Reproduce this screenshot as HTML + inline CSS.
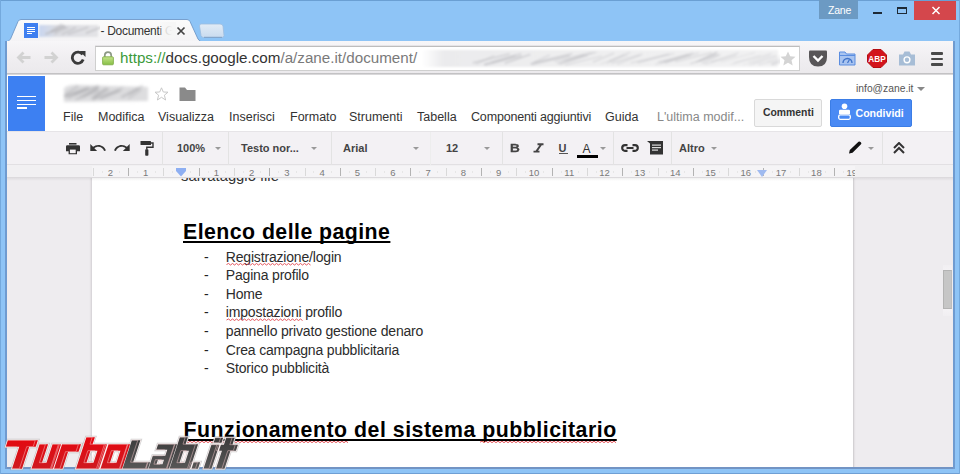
<!DOCTYPE html>
<html><head><meta charset="utf-8">
<style>
*{margin:0;padding:0;box-sizing:border-box}
html,body{width:960px;height:474px;overflow:hidden;background:#8ec4f6;font-family:"Liberation Sans",sans-serif}
.a{position:absolute}
.t{position:absolute;white-space:nowrap;line-height:1}
</style></head><body>
<!-- window frame -->
<div class="a" style="left:0;top:0;width:960px;height:474px;background:#8ec4f6"></div>
<div class="a" style="left:0;top:0;width:1px;height:474px;background:#6a9fd3"></div>
<div class="a" style="left:959px;top:0;width:1px;height:474px;background:#6a9fd3"></div>
<div class="a" style="left:0;top:0;width:960px;height:1px;background:#6a9fd3"></div>

<!-- title bar: Zane badge, window buttons -->
<div class="a" style="left:819px;top:0;width:39px;height:19px;background:#6c9ac3"></div>
<div class="t" style="left:828px;top:5px;font-size:10.5px;letter-spacing:-0.2px;color:#fff">Zane</div>
<div class="a" style="left:873px;top:12px;width:9px;height:2px;background:#1e2a36"></div>
<div class="a" style="left:897px;top:7px;width:10px;height:7px;border:1px solid #1e2a36;border-top-width:2px"></div>
<div class="a" style="left:914px;top:1px;width:42px;height:19px;background:#d4474c"></div>
<svg class="a" style="left:931px;top:6px" width="10" height="9" viewBox="0 0 10 9"><path d="M1.5 1 L8.5 8 M8.5 1 L1.5 8" stroke="#fff" stroke-width="1.5"/></svg>

<!-- tab -->
<svg class="a" style="left:0;top:0" width="960" height="80">
  <defs><linearGradient id="tabg" x1="0" y1="0" x2="0" y2="1"><stop offset="0" stop-color="#fbfbfb"/><stop offset="1" stop-color="#f4f3f5"/></linearGradient></defs><path d="M5 42.5 Q9 41.5 10.5 39 L18 21.5 Q19 19.5 21 19.5 L187 19.5 Q189 19.5 190 21.5 L198 39 Q199.5 41.5 203 42.5 Z" fill="url(#tabg)" stroke="#6f98c8" stroke-width="0.9"/>
  <defs><linearGradient id="ntg" x1="0" y1="0" x2="0" y2="1"><stop offset="0" stop-color="#e2ecf6"/><stop offset="1" stop-color="#c9dbef"/></linearGradient></defs><path d="M201 24 L220 24 Q222.5 24 223 26 L224 35.5 Q224 37.5 222 37.5 L203.5 37.5 Q201.5 37.5 201 35.5 L199.5 26 Q199.5 24 201 24 Z" fill="url(#ntg)" stroke="#9cbde0" stroke-width="0.8"/><path d="M204 37.3 L222 37.3" stroke="#7d9fc6" stroke-width="1"/>
</svg>
<div class="a" style="left:24px;top:23px;width:14px;height:15px;background:#3e7ff0"></div>
<div class="a" style="left:27px;top:27px;width:8px;height:1px;background:#fff"></div>
<div class="a" style="left:27px;top:29px;width:8px;height:1px;background:#fff"></div>
<div class="a" style="left:27px;top:31px;width:8px;height:1px;background:#fff"></div>
<div class="a" style="left:27px;top:33px;width:5px;height:1px;background:#fff"></div>
<svg class="a" style="left:38px;top:22px" width="62" height="18" viewBox="0 0 62 18"><defs><filter id="bl3" x="-10%" y="-30%" width="120%" height="160%"><feGaussianBlur stdDeviation="1.2"/></filter><linearGradient id="tg" x1="0" x2="1"><stop offset="0" stop-color="#c9d6ef"/><stop offset="0.3" stop-color="#dcdde2"/><stop offset="1" stop-color="#e3e3e6"/></linearGradient></defs><g filter="url(#bl3)"><rect x="1" y="3" width="59" height="12" fill="url(#tg)"/><path d="M12.6 9.2 L24.0 2.2" stroke="#b8b8bd" stroke-width="2.0" opacity="0.44"/><path d="M16.1 12.5 L30.8 5.5" stroke="#b8b8bd" stroke-width="1.3" opacity="0.53"/><path d="M29.7 12.3 L50.3 5.3" stroke="#b8b8bd" stroke-width="2.1" opacity="0.48"/><path d="M23.7 12.5 L38.0 5.5" stroke="#b8b8bd" stroke-width="2.2" opacity="0.45"/><path d="M12.9 9.9 L25.7 2.9" stroke="#b8b8bd" stroke-width="1.7" opacity="0.58"/><path d="M16.8 10.7 L26.9 3.7" stroke="#b8b8bd" stroke-width="1.6" opacity="0.57"/><path d="M47.9 11.1 L66.2 4.1" stroke="#b8b8bd" stroke-width="1.8" opacity="0.60"/><path d="M7.4 12.1 L28.2 5.1" stroke="#b8b8bd" stroke-width="2.1" opacity="0.64"/></g></svg>
<div class="t" style="left:100.5px;top:25px;font-size:12px;letter-spacing:-0.3px;color:#333">- Documenti G</div>
<div class="a" style="left:159px;top:22px;width:17px;height:16px;background:linear-gradient(90deg,rgba(246,246,246,0.2),rgba(246,246,246,0.85) 40%,#f6f6f6 80%)"></div>
<svg class="a" style="left:176px;top:26px" width="10" height="10" viewBox="0 0 10 10"><path d="M1.5 1.5 L8.5 8.5 M8.5 1.5 L1.5 8.5" stroke="#444" stroke-width="1.7"/></svg>

<!-- toolbar -->
<div class="a" style="left:7px;top:41px;width:946px;height:33px;background:linear-gradient(#f7f6f8,#efedf0 60%,#ebe9ec);"></div>
<div class="a" style="left:7px;top:73px;width:946px;height:1px;background:#c3c2c4"></div>
<div class="a" style="left:7px;top:74px;width:946px;height:1.5px;background:#d9d8da"></div>
<!-- nav buttons -->
<svg class="a" style="left:16px;top:50px" width="72" height="16" viewBox="0 0 72 16">
  <path d="M2.5 7.5 L14.5 7.5 M7.5 2.5 L2.5 7.5 L7.5 12.5" stroke="#d2d2d2" stroke-width="2.8" fill="none"/>
  <path d="M28.5 7.5 L40.5 7.5 M35.5 2.5 L40.5 7.5 L35.5 12.5" stroke="#d2d2d2" stroke-width="2.8" fill="none"/>
</svg>
<svg class="a" style="left:70px;top:50px" width="17" height="15" viewBox="0 0 17 15">
  <path d="M12.6 4.6 A5.6 5.6 0 1 0 13.2 9.6" stroke="#3a3a3a" stroke-width="2.8" fill="none"/>
  <path d="M9.5 1 L15.5 1 L15.5 7 Z" fill="#3a3a3a"/>
</svg>
<!-- address box -->
<div class="a" style="left:95px;top:46px;width:705px;height:25px;background:#fff;border:1px solid #cfcfcf;border-top-color:#bdbdbd;box-shadow:0 -1px 0 #e6e4e7"></div>
<svg class="a" style="left:102px;top:51px" width="12" height="15" viewBox="0 0 12 15"><defs><linearGradient id="lk" x1="0" y1="0" x2="0" y2="1"><stop offset="0" stop-color="#c6e58c"/><stop offset="1" stop-color="#86be45"/></linearGradient></defs>
  <path d="M2.8 6.5 L2.8 4.3 A3.2 3.2 0 0 1 9.2 4.3 L9.2 6.5" stroke="#8d9a86" stroke-width="1.7" fill="none"/>
  <rect x="0.6" y="5.8" width="10.8" height="8" rx="1" fill="url(#lk)" stroke="#7aa840" stroke-width="0.8"/>
</svg>
<div class="t" style="left:120px;top:50px;font-size:15.2px;color:#333"><span style="color:#3c9a3a">https://</span>docs.google.com<span style="color:#7a7a7a">/a/zane.it/document/</span></div>
<svg class="a" style="left:420px;top:47px" width="360" height="23" viewBox="0 0 360 23"><defs><filter id="bl" x="-5%" y="-30%" width="110%" height="160%"><feGaussianBlur stdDeviation="1.3"/></filter><linearGradient id="ab" x1="0" x2="1"><stop offset="0" stop-color="#fff"/><stop offset="0.06" stop-color="#ebebed"/><stop offset="0.5" stop-color="#efeff0"/><stop offset="1" stop-color="#f2f2f3"/></linearGradient></defs><g filter="url(#bl)"><rect x="2" y="3" width="356" height="17" fill="url(#ab)"/><path d="M71.4 15.5 L101.4 6.5" stroke="#b9b9be" stroke-width="1.8" opacity="0.43"/><path d="M55.9 17.3 L74.2 8.3" stroke="#b9b9be" stroke-width="1.5" opacity="0.35"/><path d="M139.6 17.3 L168.0 8.3" stroke="#b9b9be" stroke-width="1.7" opacity="0.43"/><path d="M63.6 17.5 L95.5 8.5" stroke="#b9b9be" stroke-width="1.7" opacity="0.45"/><path d="M110.4 17.0 L129.8 8.0" stroke="#b9b9be" stroke-width="1.8" opacity="0.36"/><path d="M52.8 15.9 L89.8 6.9" stroke="#b9b9be" stroke-width="1.9" opacity="0.48"/><path d="M114.3 15.6 L152.5 6.6" stroke="#b9b9be" stroke-width="2.0" opacity="0.39"/><path d="M134.2 14.4 L171.5 5.4" stroke="#b9b9be" stroke-width="1.3" opacity="0.34"/><path d="M136.9 16.5 L164.5 7.5" stroke="#b9b9be" stroke-width="1.5" opacity="0.40"/><path d="M84.7 16.3 L110.4 7.3" stroke="#b9b9be" stroke-width="1.8" opacity="0.48"/><path d="M111.4 17.4 L149.8 8.4" stroke="#b9b9be" stroke-width="2.2" opacity="0.43"/><path d="M64.7 17.9 L101.6 8.9" stroke="#b9b9be" stroke-width="2.1" opacity="0.41"/><path d="M197.1 17.3 L219.8 8.3" stroke="#b9b9be" stroke-width="1.8" opacity="0.25"/><path d="M145.1 18.0 L181.9 9.0" stroke="#b9b9be" stroke-width="1.3" opacity="0.32"/><path d="M172.8 15.2 L194.2 6.2" stroke="#b9b9be" stroke-width="2.0" opacity="0.33"/><path d="M143.5 14.2 L175.1 5.2" stroke="#b9b9be" stroke-width="1.9" opacity="0.26"/><path d="M210.5 16.0 L250.0 7.0" stroke="#b9b9be" stroke-width="2.2" opacity="0.25"/><path d="M146.2 14.1 L177.4 5.1" stroke="#b9b9be" stroke-width="1.4" opacity="0.27"/><path d="M188.8 14.2 L210.3 5.2" stroke="#b9b9be" stroke-width="2.1" opacity="0.25"/><path d="M216.7 15.5 L254.4 6.5" stroke="#b9b9be" stroke-width="1.7" opacity="0.28"/><path d="M191.5 16.2 L222.6 7.2" stroke="#b9b9be" stroke-width="1.8" opacity="0.34"/><path d="M180.6 16.9 L208.0 7.9" stroke="#b9b9be" stroke-width="1.4" opacity="0.25"/><path d="M218.2 16.2 L247.7 7.2" stroke="#b9b9be" stroke-width="1.2" opacity="0.27"/><path d="M186.4 16.5 L204.8 7.5" stroke="#b9b9be" stroke-width="1.8" opacity="0.22"/><path d="M270.2 16.7 L298.4 7.7" stroke="#b9b9be" stroke-width="1.6" opacity="0.40"/><path d="M279.0 14.2 L297.5 5.2" stroke="#b9b9be" stroke-width="1.9" opacity="0.44"/><path d="M240.1 16.4 L268.1 7.4" stroke="#b9b9be" stroke-width="1.5" opacity="0.34"/><path d="M245.0 16.4 L271.1 7.4" stroke="#b9b9be" stroke-width="1.5" opacity="0.34"/><path d="M281.8 16.3 L300.4 7.3" stroke="#b9b9be" stroke-width="1.9" opacity="0.33"/><path d="M237.8 15.0 L273.5 6.0" stroke="#b9b9be" stroke-width="1.4" opacity="0.35"/><path d="M275.8 15.3 L296.1 6.3" stroke="#b9b9be" stroke-width="1.5" opacity="0.42"/><path d="M255.1 14.7 L291.9 5.7" stroke="#b9b9be" stroke-width="1.5" opacity="0.39"/><path d="M290.8 14.9 L318.7 5.9" stroke="#b9b9be" stroke-width="1.3" opacity="0.37"/><path d="M235.3 17.4 L271.0 8.4" stroke="#b9b9be" stroke-width="1.4" opacity="0.32"/><path d="M284.6 17.2 L316.7 8.2" stroke="#b9b9be" stroke-width="1.5" opacity="0.29"/><path d="M243.4 15.1 L278.8 6.1" stroke="#b9b9be" stroke-width="1.5" opacity="0.35"/><path d="M323.1 17.7 L350.1 8.7" stroke="#b9b9be" stroke-width="1.4" opacity="0.15"/><path d="M351.9 17.9 L389.2 8.9" stroke="#b9b9be" stroke-width="1.6" opacity="0.25"/><path d="M351.0 17.0 L373.9 8.0" stroke="#b9b9be" stroke-width="2.0" opacity="0.22"/><path d="M328.5 15.4 L352.9 6.4" stroke="#b9b9be" stroke-width="1.4" opacity="0.16"/><path d="M332.4 17.2 L356.7 8.2" stroke="#b9b9be" stroke-width="1.2" opacity="0.24"/><path d="M338.2 17.6 L376.5 8.6" stroke="#b9b9be" stroke-width="2.1" opacity="0.21"/><path d="M300.7 14.7 L335.1 5.7" stroke="#b9b9be" stroke-width="1.5" opacity="0.22"/><path d="M328.9 17.8 L356.0 8.8" stroke="#b9b9be" stroke-width="1.8" opacity="0.18"/><path d="M313.9 15.9 L350.8 6.9" stroke="#b9b9be" stroke-width="2.0" opacity="0.19"/><path d="M310.9 17.3 L340.6 8.3" stroke="#b9b9be" stroke-width="1.4" opacity="0.23"/><path d="M350.7 17.3 L386.4 8.3" stroke="#b9b9be" stroke-width="1.2" opacity="0.21"/><path d="M347.4 15.1 L366.5 6.1" stroke="#b9b9be" stroke-width="1.5" opacity="0.20"/></g></svg>
<svg class="a" style="left:780px;top:51px" width="16" height="15" viewBox="0 0 16 15"><path d="M8 0.5 L10.2 5.3 L15.5 5.8 L11.5 9.3 L12.7 14.5 L8 11.8 L3.3 14.5 L4.5 9.3 L0.5 5.8 L5.8 5.3 Z" fill="#d4d4d4"/></svg>
<!-- extension icons -->
<svg class="a" style="left:808px;top:50px" width="20" height="17" viewBox="0 0 20 17"><path d="M1 1.5 Q1 0.5 2 0.5 L18 0.5 Q19 0.5 19 1.5 L19 7 Q19 16.5 10 16.5 Q1 16.5 1 7 Z" fill="#585658"/><path d="M5.5 6 L10 10.5 L14.5 6" stroke="#fff" stroke-width="2.4" fill="none"/></svg>
<svg class="a" style="left:839px;top:51px" width="17" height="15" viewBox="0 0 17 15"><path d="M0.5 1 L6 1 L7.5 3 L16 3 L16 14 L0.5 14 Z" fill="#a9c4f0" stroke="#5b8de0"/><path d="M0.5 4.5 L16 4.5" stroke="#5b8de0"/><path d="M4 12 A4.5 4.5 0 0 1 13 12" stroke="#3f72c8" stroke-width="1.4" fill="none"/><path d="M8.5 12 L10.5 8.5" stroke="#3f72c8" stroke-width="1.2"/></svg>
<svg class="a" style="left:867px;top:49px" width="20" height="19" viewBox="0 0 20 19"><path d="M6 0.5 L14 0.5 L19.5 6 L19.5 13 L14 18.5 L6 18.5 L0.5 13 L0.5 6 Z" fill="#d3141c" stroke="#b40d12"/><text x="10" y="13" text-anchor="middle" font-family="Liberation Sans" font-weight="bold" font-size="8.2" fill="#fff">ABP</text></svg>
<svg class="a" style="left:898px;top:51px" width="18" height="15" viewBox="0 0 18 15"><path d="M1 3.5 L5 3.5 L6.5 0.5 L11.5 0.5 L13 3.5 L17 3.5 L17 14.5 L1 14.5 Z" fill="#a7bdd6"/><circle cx="9" cy="8.8" r="3.6" fill="#fff"/><circle cx="9" cy="8.8" r="2.2" fill="#a7bdd6"/></svg>
<div class="a" style="left:931px;top:52px;width:12px;height:2.5px;background:#4a4a4a;border-radius:1px"></div>
<div class="a" style="left:931px;top:57.5px;width:12px;height:2.5px;background:#4a4a4a;border-radius:1px"></div>
<div class="a" style="left:931px;top:63px;width:12px;height:2.5px;background:#4a4a4a;border-radius:1px"></div>

<!-- docs header -->
<div class="a" style="left:7px;top:75px;width:946px;height:56px;background:#fff"></div>
<div class="a" style="left:8px;top:75.5px;width:37px;height:55.5px;background:#3d80f2"></div>
<div class="a" style="left:17.3px;top:95.8px;width:18.5px;height:1.7px;background:#fff"></div>
<div class="a" style="left:17.3px;top:99.6px;width:18.5px;height:1.7px;background:#fff"></div>
<div class="a" style="left:17.3px;top:103.5px;width:18.5px;height:1.7px;background:#fff"></div>
<div class="a" style="left:17.3px;top:107.3px;width:10px;height:1.7px;background:#fff"></div>
<svg class="a" style="left:60px;top:80px" width="92" height="26" viewBox="0 0 92 26"><defs><filter id="bl2" x="-10%" y="-30%" width="120%" height="160%"><feGaussianBlur stdDeviation="1.4"/></filter></defs><g filter="url(#bl2)"><path d="M4 8 Q10 4 20 5 L88 7 L88 21 L4 22 Z" fill="#dddddf"/><path d="M22.7 16.9 L37.4 7.9" stroke="#a9a9ad" stroke-width="1.6" opacity="0.54"/><path d="M25.6 15.6 L38.6 6.6" stroke="#a9a9ad" stroke-width="1.5" opacity="0.50"/><path d="M4.9 14.8 L18.5 5.8" stroke="#a9a9ad" stroke-width="2.6" opacity="0.39"/><path d="M15.6 19.5 L38.9 10.5" stroke="#a9a9ad" stroke-width="2.3" opacity="0.49"/><path d="M68.3 18.7 L81.2 9.7" stroke="#a9a9ad" stroke-width="1.9" opacity="0.40"/><path d="M8.2 18.3 L25.8 9.3" stroke="#a9a9ad" stroke-width="1.7" opacity="0.55"/><path d="M44.7 15.9 L63.4 6.9" stroke="#a9a9ad" stroke-width="1.6" opacity="0.37"/><path d="M14.4 14.8 L38.7 5.8" stroke="#a9a9ad" stroke-width="1.9" opacity="0.55"/><path d="M31.7 18.1 L49.1 9.1" stroke="#a9a9ad" stroke-width="2.4" opacity="0.44"/><path d="M40.2 18.9 L61.7 9.9" stroke="#a9a9ad" stroke-width="2.4" opacity="0.45"/><path d="M68.6 14.8 L82.7 5.8" stroke="#a9a9ad" stroke-width="2.5" opacity="0.40"/><path d="M34.2 17.0 L46.9 8.0" stroke="#a9a9ad" stroke-width="2.5" opacity="0.55"/><path d="M61.3 17.3 L78.9 8.3" stroke="#a9a9ad" stroke-width="2.3" opacity="0.55"/><path d="M31.9 19.5 L59.1 10.5" stroke="#a9a9ad" stroke-width="2.1" opacity="0.58"/><path d="M4.2 16.8 L28.9 7.8" stroke="#a9a9ad" stroke-width="2.8" opacity="0.64"/><path d="M19.9 17.0 L38.9 8.0" stroke="#a9a9ad" stroke-width="1.5" opacity="0.51"/></g></svg>
<svg class="a" style="left:154px;top:87px" width="15" height="14" viewBox="0 0 15 14"><path d="M7.5 0.8 L9.3 5 L14 5.2 L10.4 8.2 L11.6 13 L7.5 10.3 L3.4 13 L4.6 8.2 L1 5.2 L5.7 5 Z" fill="none" stroke="#c8c8c8" stroke-width="1"/></svg>
<svg class="a" style="left:179px;top:87px" width="17" height="14" viewBox="0 0 17 14"><path d="M0.5 0.5 L6 0.5 L8 3 L16.5 3 L16.5 14 L0.5 14 Z" fill="#8a8a8a"/></svg>
<div class="t" style="left:63px;top:111px;font-size:12.5px;color:#333">File</div>
<div class="t" style="left:98px;top:111px;font-size:12.5px;color:#333">Modifica</div>
<div class="t" style="left:158px;top:111px;font-size:12.5px;color:#333">Visualizza</div>
<div class="t" style="left:229px;top:111px;font-size:12.5px;color:#333">Inserisci</div>
<div class="t" style="left:290px;top:111px;font-size:12.5px;color:#333">Formato</div>
<div class="t" style="left:349px;top:111px;font-size:12.5px;color:#333">Strumenti</div>
<div class="t" style="left:417px;top:111px;font-size:12.5px;color:#333">Tabella</div>
<div class="t" style="left:471px;top:111px;font-size:12.5px;letter-spacing:-0.17px;color:#333">Componenti aggiuntivi</div>
<div class="t" style="left:605px;top:111px;font-size:12.5px;color:#333">Guida</div>
<div class="t" style="left:657px;top:111px;font-size:12.5px;color:#888">L'ultima modif...</div>
<div class="t" style="left:856px;top:83.5px;font-size:10.3px;color:#555">info@zane.it</div>
<svg class="a" style="left:917px;top:87px" width="8" height="5"><path d="M0 0 L8 0 L4 4 Z" fill="#888"/></svg>
<div class="a" style="left:754px;top:99px;width:68px;height:28px;background:#f5f5f5;border:1px solid #d9d9d9;border-radius:2px"></div>
<div class="t" style="left:763px;top:107.5px;font-size:10.4px;font-weight:bold;color:#333">Commenti</div>
<div class="a" style="left:830px;top:99px;width:82px;height:28px;background:#4a8af4;border:1px solid #3b7de6;border-radius:2px"></div>
<svg class="a" style="left:838px;top:103px" width="13" height="17" viewBox="0 0 13 17"><circle cx="6.5" cy="3.2" r="2.8" fill="#fff"/><path d="M1 8 Q1 6.8 2.2 6.8 L10.8 6.8 Q12 6.8 12 8 L12 11 L1 11 Z" fill="#fff"/><rect x="0.7" y="11.8" width="11.6" height="4.5" rx="1.5" fill="none" stroke="#fff" stroke-width="1.3"/></svg>
<div class="t" style="left:855.5px;top:107.5px;font-size:10.6px;font-weight:bold;color:#fff">Condividi</div>

<!-- docs toolbar -->
<div class="a" style="left:7px;top:131px;width:946px;height:34px;background:#f3f1f4;border-top:1px solid #e6e4e7;border-bottom:1px solid #e2e0e3"></div>
<svg class="a" style="left:65.5px;top:142.5px" width="14" height="12" viewBox="0 0 14 12"><rect x="3" y="0" width="7.5" height="1.6" fill="#333"/><path d="M1.3 2.2 L12.7 2.2 Q14 2.2 14 3.5 L14 8.3 L11 8.3 L11 11.3 L2.6 11.3 L2.6 8.3 L0 8.3 L0 3.5 Q0 2.2 1.3 2.2 Z" fill="#333"/><rect x="3.9" y="6.6" width="5.8" height="3.6" fill="#f5f3f5"/></svg>
<svg class="a" style="left:89.5px;top:143.5px" width="16" height="8" viewBox="1.6 7.6 21 9"><path d="M12.5 8c-2.65 0-5.05.99-6.9 2.6L2 7v9h9l-3.62-3.62c1.39-1.16 3.16-1.88 5.12-1.88 3.54 0 6.55 2.31 7.6 5.5l2.37-.78C21.08 11.03 17.15 8 12.5 8z" fill="#333"/></svg>
<svg class="a" style="left:113.5px;top:143.5px" width="16" height="8" viewBox="1.4 7.6 21 9"><path d="M18.4 10.6C16.55 8.99 14.15 8 11.5 8c-4.65 0-8.58 3.03-9.96 7.22L3.9 16c1.05-3.19 4.05-5.5 7.6-5.5 1.95 0 3.730.72 5.12 1.88L13 16h9V7l-3.6 3.6z" fill="#333"/></svg>
<svg class="a" style="left:139.5px;top:140.5px" width="14" height="15" viewBox="0 0 14 15"><rect x="0.5" y="0" width="10.5" height="4" rx="0.6" fill="#333"/><path d="M11 2 L13 2 L13 6.3 L6.8 6.3 L6.8 8.5" stroke="#333" stroke-width="1.4" fill="none"/><rect x="5.2" y="8.3" width="3.2" height="6.5" rx="0.8" fill="#333"/></svg>
<div class="a" style="left:162px;top:132px;width:1px;height:33px;background:#e3e3e3"></div>
<div class="t" style="left:177px;top:143px;font-size:11px;font-weight:bold;color:#444">100%</div>
<svg class="a" style="left:215px;top:147px" width="6" height="4"><path d="M0 0 L6 0 L3 3 Z" fill="#999"/></svg>
<div class="a" style="left:228px;top:132px;width:1px;height:33px;background:#e3e3e3"></div>
<div class="t" style="left:241px;top:143px;font-size:11px;font-weight:bold;color:#444">Testo nor...</div>
<svg class="a" style="left:311px;top:147px" width="6" height="4"><path d="M0 0 L6 0 L3 3 Z" fill="#999"/></svg>
<div class="a" style="left:331px;top:132px;width:1px;height:33px;background:#e3e3e3"></div>
<div class="t" style="left:343px;top:143px;font-size:11px;font-weight:bold;color:#444">Arial</div>
<svg class="a" style="left:413px;top:147px" width="6" height="4"><path d="M0 0 L6 0 L3 3 Z" fill="#999"/></svg>
<div class="a" style="left:430px;top:132px;width:1px;height:33px;background:#ededed"></div>
<div class="t" style="left:446px;top:143px;font-size:11px;font-weight:bold;color:#444">12</div>
<svg class="a" style="left:484px;top:147px" width="6" height="4"><path d="M0 0 L6 0 L3 3 Z" fill="#999"/></svg>
<div class="a" style="left:502px;top:132px;width:1px;height:33px;background:#e3e3e3"></div>
<div class="t" style="left:509.5px;top:142.8px;font-size:11.5px;font-weight:bold;color:#444;transform:scaleX(1.18);transform-origin:0 0;-webkit-text-stroke:0.3px #444">B</div>
<svg class="a" style="left:533px;top:143px" width="11" height="10" viewBox="0 0 11 10"><path d="M4.5 1.2 L10.5 1.2 M0.5 8.6 L6.5 8.6 M8.3 1.2 L3.2 8.6" stroke="#444" stroke-width="1.9" fill="none"/></svg>
<div class="t" style="left:558.5px;top:143px;font-size:11px;font-weight:bold;color:#444">U</div><div class="a" style="left:558.5px;top:153px;width:9px;height:1px;background:#555"></div>
<div class="t" style="left:582.5px;top:142.5px;font-size:12px;color:#333">A</div>
<div class="a" style="left:577px;top:155px;width:21px;height:3px;background:#000"></div>
<svg class="a" style="left:600px;top:147px" width="6" height="4"><path d="M0 0 L6 0 L3 3 Z" fill="#999"/></svg>
<div class="a" style="left:613px;top:132px;width:1px;height:33px;background:#e3e3e3"></div>
<svg class="a" style="left:621px;top:144px" width="18" height="8" viewBox="0 0 18 8"><path d="M6.5 1.2 L4 1.2 A2.8 2.8 0 0 0 4 6.8 L6.5 6.8 M11.5 1.2 L14 1.2 A2.8 2.8 0 0 1 14 6.8 L11.5 6.8 M5.5 4 L12.5 4" stroke="#333" stroke-width="2.2" fill="none"/></svg>
<svg class="a" style="left:646.5px;top:140.5px" width="16" height="14" viewBox="0 0 16 14"><path d="M0 0 L16 0 L16 13.5 L3 13.5 L3 2.5 Z" fill="#333"/><rect x="5" y="3.5" width="9" height="1.2" fill="#ddd"/><rect x="5" y="6" width="9" height="1.2" fill="#ddd"/><rect x="5" y="8.5" width="6" height="1.2" fill="#ddd"/></svg>
<div class="a" style="left:671px;top:132px;width:1px;height:33px;background:#e3e3e3"></div>
<div class="t" style="left:679px;top:143px;font-size:11px;font-weight:bold;color:#444">Altro</div>
<svg class="a" style="left:711px;top:147px" width="6" height="4"><path d="M0 0 L6 0 L3 3 Z" fill="#999"/></svg>
<svg class="a" style="left:848px;top:141px" width="14" height="13" viewBox="0 0 14 13"><path d="M1 12.5 L1.8 9 L10.5 0.8 Q11.5 0 12.5 1 L13 1.5 Q13.8 2.5 13 3.3 L4.5 11.8 Z" fill="#111"/></svg>
<svg class="a" style="left:868px;top:147px" width="6" height="4"><path d="M0 0 L6 0 L3 3 Z" fill="#999"/></svg>
<div class="a" style="left:882px;top:132px;width:1px;height:33px;background:#e3e3e3"></div>
<svg class="a" style="left:893px;top:142px" width="12" height="12" viewBox="0 0 12 12"><path d="M1 6 L6 1 L11 6 M1 11 L6 6 L11 11" stroke="#333" stroke-width="2" fill="none"/></svg>

<!-- document area -->
<div class="a" style="left:7px;top:178px;width:946px;height:289px;background:#eeecef"></div>
<div class="a" style="left:91px;top:178px;width:763px;height:289px;background:#fff;border-left:1px solid #d9d6da;border-right:1px solid #d3d1d4;box-shadow:-1px 0 1px rgba(80,60,80,0.06),1px 0 1px rgba(80,60,80,0.06)"></div>
<div class="a" style="left:943px;top:265px;width:9px;height:51px;background:linear-gradient(#f1eff2,#f8f7f9 30%,#f8f7f9 70%,#f1eff2)"></div><div class="a" style="left:943px;top:270px;width:9px;height:39px;background:#c6c6c6;border:1px solid #b3b3b3;border-right-color:#bdbdbd"></div>

<!-- doc content -->
<div class="t" style="left:181px;top:169px;font-size:14.8px;color:#333">salvataggio file</div>
<div class="t" style="left:183px;top:221.7px;font-size:21.3px;font-weight:bold;color:#000;letter-spacing:0.45px;text-decoration:underline;text-decoration-thickness:1.6px;text-underline-offset:2.2px;text-decoration-skip-ink:none">Elenco delle pagine</div>
<div class="t" style="left:204px;top:249.65px;font-size:14px;color:#222">-</div>
<div class="t" style="left:225.8px;top:249.65px;font-size:14px;letter-spacing:-0.18px;color:#2c2c2c">Registrazione/login</div>
<div class="t" style="left:204px;top:268.23px;font-size:14px;color:#222">-</div>
<div class="t" style="left:225.8px;top:268.23px;font-size:14px;letter-spacing:-0.18px;color:#2c2c2c">Pagina profilo</div>
<div class="t" style="left:204px;top:286.81px;font-size:14px;color:#222">-</div>
<div class="t" style="left:225.8px;top:286.81px;font-size:14px;letter-spacing:-0.18px;color:#2c2c2c">Home</div>
<div class="t" style="left:204px;top:305.39px;font-size:14px;color:#222">-</div>
<div class="t" style="left:225.8px;top:305.39px;font-size:14px;letter-spacing:-0.18px;color:#2c2c2c">impostazioni profilo</div>
<div class="t" style="left:204px;top:323.97px;font-size:14px;color:#222">-</div>
<div class="t" style="left:225.8px;top:323.97px;font-size:14px;letter-spacing:-0.18px;color:#2c2c2c">pannello privato gestione denaro</div>
<div class="t" style="left:204px;top:342.55px;font-size:14px;color:#222">-</div>
<div class="t" style="left:225.8px;top:342.55px;font-size:14px;letter-spacing:-0.18px;color:#2c2c2c">Crea campagna pubblicitaria</div>
<div class="t" style="left:204px;top:361.13px;font-size:14px;color:#222">-</div>
<div class="t" style="left:225.8px;top:361.13px;font-size:14px;letter-spacing:-0.18px;color:#2c2c2c">Storico pubblicità</div>
<div class="t" style="left:183.5px;top:419.7px;font-size:21.3px;font-weight:bold;color:#000;letter-spacing:0.52px;text-decoration:underline;text-decoration-thickness:1.6px;text-underline-offset:2.2px;text-decoration-skip-ink:none">Funzionamento del sistema pubblicitario</div>
<svg class="a" style="left:0;top:0" width="960" height="474"><path d="M226.5 264.5 L228.5 263.5 L230.5 265.0 L232.5 263.5 L234.5 265.0 L236.5 263.5 L238.5 265.0 L240.5 263.5 L242.5 265.0 L244.5 263.5 L246.5 265.0 L248.5 263.5 L250.5 265.0 L252.5 263.5 L254.5 265.0 L256.5 263.5 L258.5 265.0 L260.5 263.5 L262.5 265.0 L264.5 263.5 L266.5 265.0 L268.5 263.5 L270.5 265.0 L272.5 263.5 L274.5 265.0 L276.5 263.5 L278.5 265.0 L280.5 263.5 L282.5 265.0 L284.5 263.5 L286.5 265.0 L288.5 263.5 L290.5 265.0 L292.5 263.5 L294.5 265.0 L296.5 263.5 L298.5 265.0 L300.5 263.5 L302.5 265.0 L304.5 263.5 L306.5 265.0 L308.5 263.5 L310.5 265.0 M226.5 320.0 L228.5 319.0 L230.5 320.5 L232.5 319.0 L234.5 320.5 L236.5 319.0 L238.5 320.5 L240.5 319.0 L242.5 320.5 L244.5 319.0 L246.5 320.5 L248.5 319.0 L250.5 320.5 L252.5 319.0 L254.5 320.5 L256.5 319.0 L258.5 320.5 L260.5 319.0 L262.5 320.5 L264.5 319.0 L266.5 320.5 L268.5 319.0 L270.5 320.5 L272.5 319.0 L274.5 320.5 L276.5 319.0 L278.5 320.5 L280.5 319.0 L282.5 320.5 L284.5 319.0 L286.5 320.5 L288.5 319.0 L290.5 320.5 L292.5 319.0 L294.5 320.5 L296.5 319.0 L298.5 320.5 L300.5 319.0 L302.5 320.5 M184.0 442.2 L186.0 441.2 L188.0 442.7 L190.0 441.2 L192.0 442.7 L194.0 441.2 L196.0 442.7 L198.0 441.2 L200.0 442.7 L202.0 441.2 L204.0 442.7 L206.0 441.2 L208.0 442.7 L210.0 441.2 L212.0 442.7 L214.0 441.2 L216.0 442.7 L218.0 441.2 L220.0 442.7 L222.0 441.2 L224.0 442.7 L226.0 441.2 L228.0 442.7 L230.0 441.2 L232.0 442.7 L234.0 441.2 L236.0 442.7 L238.0 441.2 L240.0 442.7 L242.0 441.2 L244.0 442.7 L246.0 441.2 L248.0 442.7 L250.0 441.2 L252.0 442.7 L254.0 441.2 L256.0 442.7 L258.0 441.2 L260.0 442.7 L262.0 441.2 L264.0 442.7 L266.0 441.2 L268.0 442.7 L270.0 441.2 L272.0 442.7 L274.0 441.2 L276.0 442.7 L278.0 441.2 L280.0 442.7 L282.0 441.2 L284.0 442.7 L286.0 441.2 L288.0 442.7 L290.0 441.2 L292.0 442.7 L294.0 441.2 L296.0 442.7 L298.0 441.2 L300.0 442.7 L302.0 441.2 L304.0 442.7 L306.0 441.2 L308.0 442.7 L310.0 441.2 L312.0 442.7 L314.0 441.2 L316.0 442.7 L318.0 441.2 L320.0 442.7 L322.0 441.2 L324.0 442.7 L326.0 441.2 L328.0 442.7 L330.0 441.2 L332.0 442.7 L334.0 441.2 L336.0 442.7 L338.0 441.2 L340.0 442.7 L342.0 441.2 L344.0 442.7 L346.0 441.2 L348.0 442.7 M480.0 442.2 L482.0 441.2 L484.0 442.7 L486.0 441.2 L488.0 442.7 L490.0 441.2 L492.0 442.7 L494.0 441.2 L496.0 442.7 L498.0 441.2 L500.0 442.7 L502.0 441.2 L504.0 442.7 L506.0 441.2 L508.0 442.7 L510.0 441.2 L512.0 442.7 L514.0 441.2 L516.0 442.7 L518.0 441.2 L520.0 442.7 L522.0 441.2 L524.0 442.7 L526.0 441.2 L528.0 442.7 L530.0 441.2 L532.0 442.7 L534.0 441.2 L536.0 442.7 L538.0 441.2 L540.0 442.7 L542.0 441.2 L544.0 442.7 L546.0 441.2 L548.0 442.7 L550.0 441.2 L552.0 442.7 L554.0 441.2 L556.0 442.7 L558.0 441.2 L560.0 442.7 L562.0 441.2 L564.0 442.7 L566.0 441.2 L568.0 442.7 L570.0 441.2 L572.0 442.7 L574.0 441.2 L576.0 442.7 L578.0 441.2 L580.0 442.7 L582.0 441.2 L584.0 442.7 L586.0 441.2 L588.0 442.7 L590.0 441.2 L592.0 442.7 L594.0 441.2 L596.0 442.7 L598.0 441.2 L600.0 442.7 L602.0 441.2 L604.0 442.7 L606.0 441.2 L608.0 442.7 L610.0 441.2 L612.0 442.7 L614.0 441.2 L616.0 442.7" stroke="#e0454c" stroke-width="0.9" fill="none"/></svg>
<!-- ruler -->
<div class="a" style="left:7px;top:165px;width:946px;height:13px;background:#f1f0f2;border-bottom:1px solid #dcdadd"></div>
<div class="a" style="left:92px;top:166px;width:765px;height:11px;background:#f5f4f6"></div>
<div class="t" style="left:98.4px;top:168px;width:24px;text-align:center;font-size:9.5px;color:#7a7a7a">2</div>
<div class="t" style="left:133.7px;top:168px;width:24px;text-align:center;font-size:9.5px;color:#7a7a7a">1</div>
<div class="t" style="left:204.3px;top:168px;width:24px;text-align:center;font-size:9.5px;color:#7a7a7a">1</div>
<div class="t" style="left:239.6px;top:168px;width:24px;text-align:center;font-size:9.5px;color:#7a7a7a">2</div>
<div class="t" style="left:274.9px;top:168px;width:24px;text-align:center;font-size:9.5px;color:#7a7a7a">3</div>
<div class="t" style="left:310.2px;top:168px;width:24px;text-align:center;font-size:9.5px;color:#7a7a7a">4</div>
<div class="t" style="left:345.5px;top:168px;width:24px;text-align:center;font-size:9.5px;color:#7a7a7a">5</div>
<div class="t" style="left:380.8px;top:168px;width:24px;text-align:center;font-size:9.5px;color:#7a7a7a">6</div>
<div class="t" style="left:416.1px;top:168px;width:24px;text-align:center;font-size:9.5px;color:#7a7a7a">7</div>
<div class="t" style="left:451.4px;top:168px;width:24px;text-align:center;font-size:9.5px;color:#7a7a7a">8</div>
<div class="t" style="left:486.7px;top:168px;width:24px;text-align:center;font-size:9.5px;color:#7a7a7a">9</div>
<div class="t" style="left:522.0px;top:168px;width:24px;text-align:center;font-size:9.5px;color:#7a7a7a">10</div>
<div class="t" style="left:557.3px;top:168px;width:24px;text-align:center;font-size:9.5px;color:#7a7a7a">11</div>
<div class="t" style="left:592.6px;top:168px;width:24px;text-align:center;font-size:9.5px;color:#7a7a7a">12</div>
<div class="t" style="left:627.9px;top:168px;width:24px;text-align:center;font-size:9.5px;color:#7a7a7a">13</div>
<div class="t" style="left:663.2px;top:168px;width:24px;text-align:center;font-size:9.5px;color:#7a7a7a">14</div>
<div class="t" style="left:698.5px;top:168px;width:24px;text-align:center;font-size:9.5px;color:#7a7a7a">15</div>
<div class="t" style="left:733.8px;top:168px;width:24px;text-align:center;font-size:9.5px;color:#7a7a7a">16</div>
<div class="t" style="left:769.1px;top:168px;width:24px;text-align:center;font-size:9.5px;color:#7a7a7a">17</div>
<div class="t" style="left:804.4px;top:168px;width:24px;text-align:center;font-size:9.5px;color:#7a7a7a">18</div>
<div class="t" style="left:839.7px;top:168px;width:24px;text-align:center;font-size:9.5px;color:#7a7a7a">19</div>
<div class="a" style="left:92.8px;top:168px;width:1px;height:8px;background:#d9d9d9"></div>
<div class="a" style="left:128.1px;top:168px;width:1px;height:8px;background:#b3b3b3"></div>
<div class="a" style="left:163.3px;top:168px;width:1px;height:8px;background:#d9d9d9"></div>
<div class="a" style="left:198.7px;top:168px;width:1px;height:8px;background:#b3b3b3"></div>
<div class="a" style="left:233.9px;top:168px;width:1px;height:8px;background:#d9d9d9"></div>
<div class="a" style="left:269.2px;top:168px;width:1px;height:8px;background:#b3b3b3"></div>
<div class="a" style="left:304.5px;top:168px;width:1px;height:8px;background:#d9d9d9"></div>
<div class="a" style="left:339.9px;top:168px;width:1px;height:8px;background:#b3b3b3"></div>
<div class="a" style="left:375.1px;top:168px;width:1px;height:8px;background:#d9d9d9"></div>
<div class="a" style="left:410.4px;top:168px;width:1px;height:8px;background:#b3b3b3"></div>
<div class="a" style="left:445.8px;top:168px;width:1px;height:8px;background:#d9d9d9"></div>
<div class="a" style="left:481.0px;top:168px;width:1px;height:8px;background:#b3b3b3"></div>
<div class="a" style="left:516.3px;top:168px;width:1px;height:8px;background:#d9d9d9"></div>
<div class="a" style="left:551.6px;top:168px;width:1px;height:8px;background:#b3b3b3"></div>
<div class="a" style="left:587.0px;top:168px;width:1px;height:8px;background:#d9d9d9"></div>
<div class="a" style="left:622.2px;top:168px;width:1px;height:8px;background:#b3b3b3"></div>
<div class="a" style="left:657.5px;top:168px;width:1px;height:8px;background:#d9d9d9"></div>
<div class="a" style="left:692.8px;top:168px;width:1px;height:8px;background:#b3b3b3"></div>
<div class="a" style="left:728.1px;top:168px;width:1px;height:8px;background:#d9d9d9"></div>
<div class="a" style="left:763.4px;top:168px;width:1px;height:8px;background:#b3b3b3"></div>
<div class="a" style="left:798.8px;top:168px;width:1px;height:8px;background:#d9d9d9"></div>
<div class="a" style="left:834.0px;top:168px;width:1px;height:8px;background:#b3b3b3"></div>
<div class="a" style="left:101.6px;top:171px;width:1px;height:2px;background:#e6e6e6"></div>
<div class="a" style="left:119.2px;top:171px;width:1px;height:2px;background:#e6e6e6"></div>
<div class="a" style="left:136.9px;top:171px;width:1px;height:2px;background:#e6e6e6"></div>
<div class="a" style="left:154.5px;top:171px;width:1px;height:2px;background:#e6e6e6"></div>
<div class="a" style="left:172.2px;top:171px;width:1px;height:2px;background:#e6e6e6"></div>
<div class="a" style="left:189.8px;top:171px;width:1px;height:2px;background:#e6e6e6"></div>
<div class="a" style="left:207.5px;top:171px;width:1px;height:2px;background:#e6e6e6"></div>
<div class="a" style="left:225.1px;top:171px;width:1px;height:2px;background:#e6e6e6"></div>
<div class="a" style="left:242.8px;top:171px;width:1px;height:2px;background:#e6e6e6"></div>
<div class="a" style="left:260.4px;top:171px;width:1px;height:2px;background:#e6e6e6"></div>
<div class="a" style="left:278.1px;top:171px;width:1px;height:2px;background:#e6e6e6"></div>
<div class="a" style="left:295.7px;top:171px;width:1px;height:2px;background:#e6e6e6"></div>
<div class="a" style="left:313.4px;top:171px;width:1px;height:2px;background:#e6e6e6"></div>
<div class="a" style="left:331.0px;top:171px;width:1px;height:2px;background:#e6e6e6"></div>
<div class="a" style="left:348.7px;top:171px;width:1px;height:2px;background:#e6e6e6"></div>
<div class="a" style="left:366.3px;top:171px;width:1px;height:2px;background:#e6e6e6"></div>
<div class="a" style="left:384.0px;top:171px;width:1px;height:2px;background:#e6e6e6"></div>
<div class="a" style="left:401.6px;top:171px;width:1px;height:2px;background:#e6e6e6"></div>
<div class="a" style="left:419.3px;top:171px;width:1px;height:2px;background:#e6e6e6"></div>
<div class="a" style="left:436.9px;top:171px;width:1px;height:2px;background:#e6e6e6"></div>
<div class="a" style="left:454.6px;top:171px;width:1px;height:2px;background:#e6e6e6"></div>
<div class="a" style="left:472.2px;top:171px;width:1px;height:2px;background:#e6e6e6"></div>
<div class="a" style="left:489.9px;top:171px;width:1px;height:2px;background:#e6e6e6"></div>
<div class="a" style="left:507.5px;top:171px;width:1px;height:2px;background:#e6e6e6"></div>
<div class="a" style="left:525.2px;top:171px;width:1px;height:2px;background:#e6e6e6"></div>
<div class="a" style="left:542.8px;top:171px;width:1px;height:2px;background:#e6e6e6"></div>
<div class="a" style="left:560.5px;top:171px;width:1px;height:2px;background:#e6e6e6"></div>
<div class="a" style="left:578.1px;top:171px;width:1px;height:2px;background:#e6e6e6"></div>
<div class="a" style="left:595.8px;top:171px;width:1px;height:2px;background:#e6e6e6"></div>
<div class="a" style="left:613.4px;top:171px;width:1px;height:2px;background:#e6e6e6"></div>
<div class="a" style="left:631.1px;top:171px;width:1px;height:2px;background:#e6e6e6"></div>
<div class="a" style="left:648.7px;top:171px;width:1px;height:2px;background:#e6e6e6"></div>
<div class="a" style="left:666.4px;top:171px;width:1px;height:2px;background:#e6e6e6"></div>
<div class="a" style="left:684.0px;top:171px;width:1px;height:2px;background:#e6e6e6"></div>
<div class="a" style="left:701.7px;top:171px;width:1px;height:2px;background:#e6e6e6"></div>
<div class="a" style="left:719.3px;top:171px;width:1px;height:2px;background:#e6e6e6"></div>
<div class="a" style="left:737.0px;top:171px;width:1px;height:2px;background:#e6e6e6"></div>
<div class="a" style="left:754.6px;top:171px;width:1px;height:2px;background:#e6e6e6"></div>
<div class="a" style="left:772.3px;top:171px;width:1px;height:2px;background:#e6e6e6"></div>
<div class="a" style="left:789.9px;top:171px;width:1px;height:2px;background:#e6e6e6"></div>
<div class="a" style="left:807.6px;top:171px;width:1px;height:2px;background:#e6e6e6"></div>
<div class="a" style="left:825.2px;top:171px;width:1px;height:2px;background:#e6e6e6"></div>
<div class="a" style="left:842.9px;top:171px;width:1px;height:2px;background:#e6e6e6"></div>
<div class="a" style="left:176px;top:168px;width:10px;height:2.5px;background:#8eaff2"></div>
<svg class="a" style="left:176px;top:171px" width="10" height="6"><path d="M0 0 L10 0 L5 5.5 Z" fill="#8eaff2"/></svg>
<svg class="a" style="left:757px;top:170px" width="10" height="7"><path d="M0 0 L10 0 L5 7 Z" fill="#9fbaf0"/></svg>

<div class="a" style="left:855px;top:166px;width:98px;height:11px;background:#f1f0f2"></div>
<div class="a" style="left:7px;top:178px;width:946px;height:3px;background:linear-gradient(rgba(0,0,0,0.06),rgba(0,0,0,0))"></div>
<!-- watermark placeholder -->
<svg class="a" style="left:0;top:430px;z-index:5" width="260" height="44" viewBox="0 430 260 44">
 <defs>
  <linearGradient id="gr" x1="0" y1="0" x2="0" y2="1"><stop offset="0" stop-color="#e5070f"/><stop offset="1" stop-color="#cf1a20"/></linearGradient>
  <linearGradient id="gg" x1="0" y1="0" x2="0" y2="1"><stop offset="0" stop-color="#3a3a3a"/><stop offset="1" stop-color="#575757"/></linearGradient>
  <clipPath id="wc"><path transform="translate(0,468.7) skewX(-18.26)" d="M-1.5 -28.4 L28.5 -28.4 L28.5 -22.0 L22.0 -22.0 L22.0 0.0 L12.0 0.0 L12.0 -22.0 L-1.5 -22.0 Z M31.5 -24.5 L40.0 -24.5 L40.0 -6.0 L44.5 -6.0 L44.5 -24.5 L53.0 -24.5 L53.0 0.0 L31.5 0.0 Z M54.0 0.0 L54.0 -24.5 L73.0 -24.5 L73.0 -17.0 L62.5 -17.0 L62.5 0.0 Z M76.0 -31.5 L84.5 -31.5 L84.5 -24.5 L99.0 -24.5 L99.0 0.0 L76.0 0.0 Z M84.5 -18.0 L91.5 -18.0 L91.5 -6.0 L84.5 -6.0 Z M100.5 -24.5 L122.0 -24.5 L122.0 0.0 L100.5 0.0 Z M108.0 -18.0 L114.5 -18.0 L114.5 -6.0 L108.0 -6.0 Z M122.5 -28.4 L131.0 -28.4 L131.0 -6.5 L148.0 -6.5 L148.0 0.0 L122.5 0.0 Z M150.0 -24.5 L169.0 -24.5 L169.0 0.0 L148.5 0.0 L148.5 -13.0 L161.0 -13.0 L161.0 -19.0 L150.0 -19.0 Z M155.0 -9.0 L161.0 -9.0 L161.0 -4.5 L155.0 -4.5 Z M169.5 -31.5 L177.5 -31.5 L177.5 -24.5 L190.0 -24.5 L190.0 0.0 L169.5 0.0 Z M177.5 -18.0 L183.0 -18.0 L183.0 -6.0 L177.5 -6.0 Z M191.5 -6.5 L198.0 -6.5 L198.0 0.0 L191.5 0.0 Z M203.5 -24.0 L211.5 -24.0 L211.5 0.0 L203.5 0.0 Z M205.0 -31.0 L213.0 -31.0 L213.0 -26.0 L205.0 -26.0 Z M216.0 -31.0 L224.5 -31.0 L224.5 -24.0 L230.0 -24.0 L230.0 -18.0 L224.5 -18.0 L224.5 0.0 L216.0 0.0 L216.0 -18.0 L213.0 -18.0 L213.0 -24.0 L216.0 -24.0 Z" fill-rule="evenodd"/></clipPath>
 </defs>
 <g transform="translate(0,468.7) skewX(-18.26)">
  <path d="M-1.5 -28.4 L28.5 -28.4 L28.5 -22.0 L22.0 -22.0 L22.0 0.0 L12.0 0.0 L12.0 -22.0 L-1.5 -22.0 Z M31.5 -24.5 L40.0 -24.5 L40.0 -6.0 L44.5 -6.0 L44.5 -24.5 L53.0 -24.5 L53.0 0.0 L31.5 0.0 Z M54.0 0.0 L54.0 -24.5 L73.0 -24.5 L73.0 -17.0 L62.5 -17.0 L62.5 0.0 Z M76.0 -31.5 L84.5 -31.5 L84.5 -24.5 L99.0 -24.5 L99.0 0.0 L76.0 0.0 Z M84.5 -18.0 L91.5 -18.0 L91.5 -6.0 L84.5 -6.0 Z M100.5 -24.5 L122.0 -24.5 L122.0 0.0 L100.5 0.0 Z M108.0 -18.0 L114.5 -18.0 L114.5 -6.0 L108.0 -6.0 Z M122.5 -28.4 L131.0 -28.4 L131.0 -6.5 L148.0 -6.5 L148.0 0.0 L122.5 0.0 Z M150.0 -24.5 L169.0 -24.5 L169.0 0.0 L148.5 0.0 L148.5 -13.0 L161.0 -13.0 L161.0 -19.0 L150.0 -19.0 Z M155.0 -9.0 L161.0 -9.0 L161.0 -4.5 L155.0 -4.5 Z M169.5 -31.5 L177.5 -31.5 L177.5 -24.5 L190.0 -24.5 L190.0 0.0 L169.5 0.0 Z M177.5 -18.0 L183.0 -18.0 L183.0 -6.0 L177.5 -6.0 Z M191.5 -6.5 L198.0 -6.5 L198.0 0.0 L191.5 0.0 Z M203.5 -24.0 L211.5 -24.0 L211.5 0.0 L203.5 0.0 Z M205.0 -31.0 L213.0 -31.0 L213.0 -26.0 L205.0 -26.0 Z M216.0 -31.0 L224.5 -31.0 L224.5 -24.0 L230.0 -24.0 L230.0 -18.0 L224.5 -18.0 L224.5 0.0 L216.0 0.0 L216.0 -18.0 L213.0 -18.0 L213.0 -24.0 L216.0 -24.0 Z" fill-rule="evenodd" fill="none" stroke="#a0a0a0" stroke-width="3" opacity="0.5"/>
  <path d="M-1.5 -28.4 L28.5 -28.4 L28.5 -22.0 L22.0 -22.0 L22.0 0.0 L12.0 0.0 L12.0 -22.0 L-1.5 -22.0 Z M31.5 -24.5 L40.0 -24.5 L40.0 -6.0 L44.5 -6.0 L44.5 -24.5 L53.0 -24.5 L53.0 0.0 L31.5 0.0 Z M54.0 0.0 L54.0 -24.5 L73.0 -24.5 L73.0 -17.0 L62.5 -17.0 L62.5 0.0 Z M76.0 -31.5 L84.5 -31.5 L84.5 -24.5 L99.0 -24.5 L99.0 0.0 L76.0 0.0 Z M84.5 -18.0 L91.5 -18.0 L91.5 -6.0 L84.5 -6.0 Z M100.5 -24.5 L122.0 -24.5 L122.0 0.0 L100.5 0.0 Z M108.0 -18.0 L114.5 -18.0 L114.5 -6.0 L108.0 -6.0 Z M122.5 -28.4 L131.0 -28.4 L131.0 -6.5 L148.0 -6.5 L148.0 0.0 L122.5 0.0 Z M150.0 -24.5 L169.0 -24.5 L169.0 0.0 L148.5 0.0 L148.5 -13.0 L161.0 -13.0 L161.0 -19.0 L150.0 -19.0 Z M155.0 -9.0 L161.0 -9.0 L161.0 -4.5 L155.0 -4.5 Z M169.5 -31.5 L177.5 -31.5 L177.5 -24.5 L190.0 -24.5 L190.0 0.0 L169.5 0.0 Z M177.5 -18.0 L183.0 -18.0 L183.0 -6.0 L177.5 -6.0 Z M191.5 -6.5 L198.0 -6.5 L198.0 0.0 L191.5 0.0 Z M203.5 -24.0 L211.5 -24.0 L211.5 0.0 L203.5 0.0 Z M205.0 -31.0 L213.0 -31.0 L213.0 -26.0 L205.0 -26.0 Z M216.0 -31.0 L224.5 -31.0 L224.5 -24.0 L230.0 -24.0 L230.0 -18.0 L224.5 -18.0 L224.5 0.0 L216.0 0.0 L216.0 -18.0 L213.0 -18.0 L213.0 -24.0 L216.0 -24.0 Z" fill-rule="evenodd" fill="none" stroke="#fbeff0" stroke-width="1.6"/>
  <path d="M-1.5 -28.4 L28.5 -28.4 L28.5 -22.0 L22.0 -22.0 L22.0 0.0 L12.0 0.0 L12.0 -22.0 L-1.5 -22.0 Z M31.5 -24.5 L40.0 -24.5 L40.0 -6.0 L44.5 -6.0 L44.5 -24.5 L53.0 -24.5 L53.0 0.0 L31.5 0.0 Z M54.0 0.0 L54.0 -24.5 L73.0 -24.5 L73.0 -17.0 L62.5 -17.0 L62.5 0.0 Z M76.0 -31.5 L84.5 -31.5 L84.5 -24.5 L99.0 -24.5 L99.0 0.0 L76.0 0.0 Z M84.5 -18.0 L91.5 -18.0 L91.5 -6.0 L84.5 -6.0 Z M100.5 -24.5 L122.0 -24.5 L122.0 0.0 L100.5 0.0 Z M108.0 -18.0 L114.5 -18.0 L114.5 -6.0 L108.0 -6.0 Z" fill-rule="evenodd" fill="url(#gr)"/>
  <path d="M122.5 -28.4 L131.0 -28.4 L131.0 -6.5 L148.0 -6.5 L148.0 0.0 L122.5 0.0 Z M150.0 -24.5 L169.0 -24.5 L169.0 0.0 L148.5 0.0 L148.5 -13.0 L161.0 -13.0 L161.0 -19.0 L150.0 -19.0 Z M155.0 -9.0 L161.0 -9.0 L161.0 -4.5 L155.0 -4.5 Z M169.5 -31.5 L177.5 -31.5 L177.5 -24.5 L190.0 -24.5 L190.0 0.0 L169.5 0.0 Z M177.5 -18.0 L183.0 -18.0 L183.0 -6.0 L177.5 -6.0 Z M191.5 -6.5 L198.0 -6.5 L198.0 0.0 L191.5 0.0 Z M203.5 -24.0 L211.5 -24.0 L211.5 0.0 L203.5 0.0 Z M205.0 -31.0 L213.0 -31.0 L213.0 -26.0 L205.0 -26.0 Z M216.0 -31.0 L224.5 -31.0 L224.5 -24.0 L230.0 -24.0 L230.0 -18.0 L224.5 -18.0 L224.5 0.0 L216.0 0.0 L216.0 -18.0 L213.0 -18.0 L213.0 -24.0 L216.0 -24.0 Z" fill-rule="evenodd" fill="url(#gg)"/>
 </g>
 <g clip-path="url(#wc)">
  <g transform="translate(-2.6,468.7) skewX(-18.26)"><path d="M-1.5 -28.4 L28.5 -28.4 L28.5 -22.0 L22.0 -22.0 L22.0 0.0 L12.0 0.0 L12.0 -22.0 L-1.5 -22.0 Z M31.5 -24.5 L40.0 -24.5 L40.0 -6.0 L44.5 -6.0 L44.5 -24.5 L53.0 -24.5 L53.0 0.0 L31.5 0.0 Z M54.0 0.0 L54.0 -24.5 L73.0 -24.5 L73.0 -17.0 L62.5 -17.0 L62.5 0.0 Z M76.0 -31.5 L84.5 -31.5 L84.5 -24.5 L99.0 -24.5 L99.0 0.0 L76.0 0.0 Z M84.5 -18.0 L91.5 -18.0 L91.5 -6.0 L84.5 -6.0 Z M100.5 -24.5 L122.0 -24.5 L122.0 0.0 L100.5 0.0 Z M108.0 -18.0 L114.5 -18.0 L114.5 -6.0 L108.0 -6.0 Z M122.5 -28.4 L131.0 -28.4 L131.0 -6.5 L148.0 -6.5 L148.0 0.0 L122.5 0.0 Z M150.0 -24.5 L169.0 -24.5 L169.0 0.0 L148.5 0.0 L148.5 -13.0 L161.0 -13.0 L161.0 -19.0 L150.0 -19.0 Z M155.0 -9.0 L161.0 -9.0 L161.0 -4.5 L155.0 -4.5 Z M169.5 -31.5 L177.5 -31.5 L177.5 -24.5 L190.0 -24.5 L190.0 0.0 L169.5 0.0 Z M177.5 -18.0 L183.0 -18.0 L183.0 -6.0 L177.5 -6.0 Z M191.5 -6.5 L198.0 -6.5 L198.0 0.0 L191.5 0.0 Z M203.5 -24.0 L211.5 -24.0 L211.5 0.0 L203.5 0.0 Z M205.0 -31.0 L213.0 -31.0 L213.0 -26.0 L205.0 -26.0 Z M216.0 -31.0 L224.5 -31.0 L224.5 -24.0 L230.0 -24.0 L230.0 -18.0 L224.5 -18.0 L224.5 0.0 L216.0 0.0 L216.0 -18.0 L213.0 -18.0 L213.0 -24.0 L216.0 -24.0 Z" fill-rule="evenodd" fill="none" stroke="#ffd0d2" stroke-width="0.7" opacity="0.6"/></g>
 </g>
</svg>
<!-- bottom frame -->
<div class="a" style="left:0;top:467px;width:960px;height:7px;background:#8ec4f6"></div>
<div class="a" style="left:5px;top:467px;width:950px;height:2px;background:#7294c4"></div>
<div class="a" style="left:5px;top:41px;width:2px;height:428px;background:#6f9bd0"></div>
<div class="a" style="left:953px;top:41px;width:2px;height:428px;background:#6f9bd0"></div>
<div class="a" style="left:0;top:473px;width:960px;height:1px;background:#6f9fd4"></div>
<div class="a" style="left:0;top:0;width:1px;height:474px;background:#74a9dd"></div>
<div class="a" style="left:959px;top:0;width:1px;height:474px;background:#74a9dd"></div>
</body></html>
